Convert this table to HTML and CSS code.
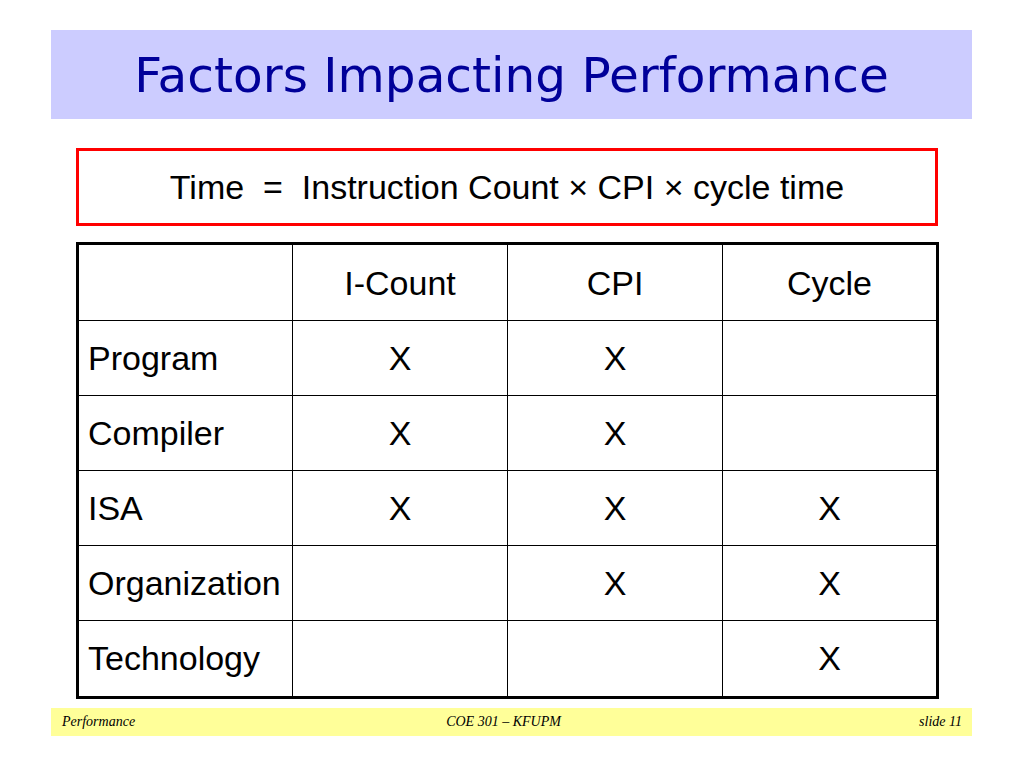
FILE: index.html
```html
<!DOCTYPE html>
<html lang="en">
<head>
<meta charset="utf-8">
<title>Factors Impacting Performance</title>
<link rel="stylesheet" href="styles.css">
</head>
<body>
<div class="slide">
  <header class="title-band">
    <h1 class="title">Factors Impacting Performance</h1>
  </header>
  <div class="formula">
    <p class="formula-text">Time&nbsp; = &nbsp;Instruction Count × CPI × cycle time</p>
  </div>
  <table class="factors">
    <tr>
      <th class="label"></th>
      <th>I-Count</th>
      <th>CPI</th>
      <th>Cycle</th>
    </tr>
    <tr>
      <td class="label">Program</td>
      <td>X</td>
      <td>X</td>
      <td></td>
    </tr>
    <tr>
      <td class="label">Compiler</td>
      <td>X</td>
      <td>X</td>
      <td></td>
    </tr>
    <tr>
      <td class="label">ISA</td>
      <td>X</td>
      <td>X</td>
      <td>X</td>
    </tr>
    <tr>
      <td class="label">Organization</td>
      <td></td>
      <td>X</td>
      <td>X</td>
    </tr>
    <tr>
      <td class="label">Technology</td>
      <td></td>
      <td></td>
      <td>X</td>
    </tr>
  </table>
  <footer class="footer">
    <span class="foot-left">Performance</span>
    <span class="foot-center">COE 301 – KFUPM</span>
    <span class="foot-right">slide 11</span>
  </footer>
</div>
</body>
</html>
```
FILE: styles.css
```css
html, body {
  margin: 0;
  padding: 0;
  background: #ffffff;
}
.slide {
  width: 1024px;
  height: 768px;
  display: flex;
  flex-direction: column;
  padding-top: 30px;
  box-sizing: border-box;
}
.title-band {
  margin-left: 51px;
  width: 921px;
  height: 89px;
  background: #ccccff;
  display: flex;
  align-items: center;
  justify-content: center;
}
.title {
  margin: 0;
  font-family: "DejaVu Sans", sans-serif;
  font-weight: normal;
  font-size: 48.5px;
  color: #000099;
  letter-spacing: 0;
  padding-top: 0;
}
.formula {
  margin-top: 29px;
  margin-left: 76px;
  width: 862px;
  height: 78px;
  box-sizing: border-box;
  border: 3px solid #ff0000;
  display: flex;
  align-items: center;
  justify-content: center;
}
.formula-text {
  margin: 0;
  font-family: "Liberation Sans", Arial, sans-serif;
  font-size: 34px;
  color: #000000;
  padding-top: 1px;
}
.factors {
  margin-top: 16px;
  margin-left: 76px;
  width: 863px;
  height: 457px;
  border-collapse: collapse;
  border: 3px solid #000000;
  table-layout: fixed;
  font-family: "Liberation Sans", Arial, sans-serif;
  font-size: 34px;
  color: #000000;
  flex: 0 0 auto;
}
.factors th, .factors td {
  border: 1px solid #000000;
  font-weight: normal;
  text-align: center;
  vertical-align: middle;
  padding: 0;
  line-height: 1;
}
.factors .label {
  text-align: left;
  padding-left: 9px;
}
.footer {
  margin-top: 9px;
  margin-left: 51px;
  width: 921px;
  height: 28px;
  background: #ffff99;
  display: flex;
  align-items: center;
  justify-content: space-between;
  padding: 0 10px 0 11px;
  box-sizing: border-box;
  font-family: "Liberation Serif", "Times New Roman", serif;
  font-style: italic;
  font-size: 14px;
  color: #000000;
}
.foot-left, .foot-right {
  flex: 1;
}
.foot-right {
  text-align: right;
}
.foot-center {
  flex: 0 0 auto;
  margin-right: 17px;
}
```
